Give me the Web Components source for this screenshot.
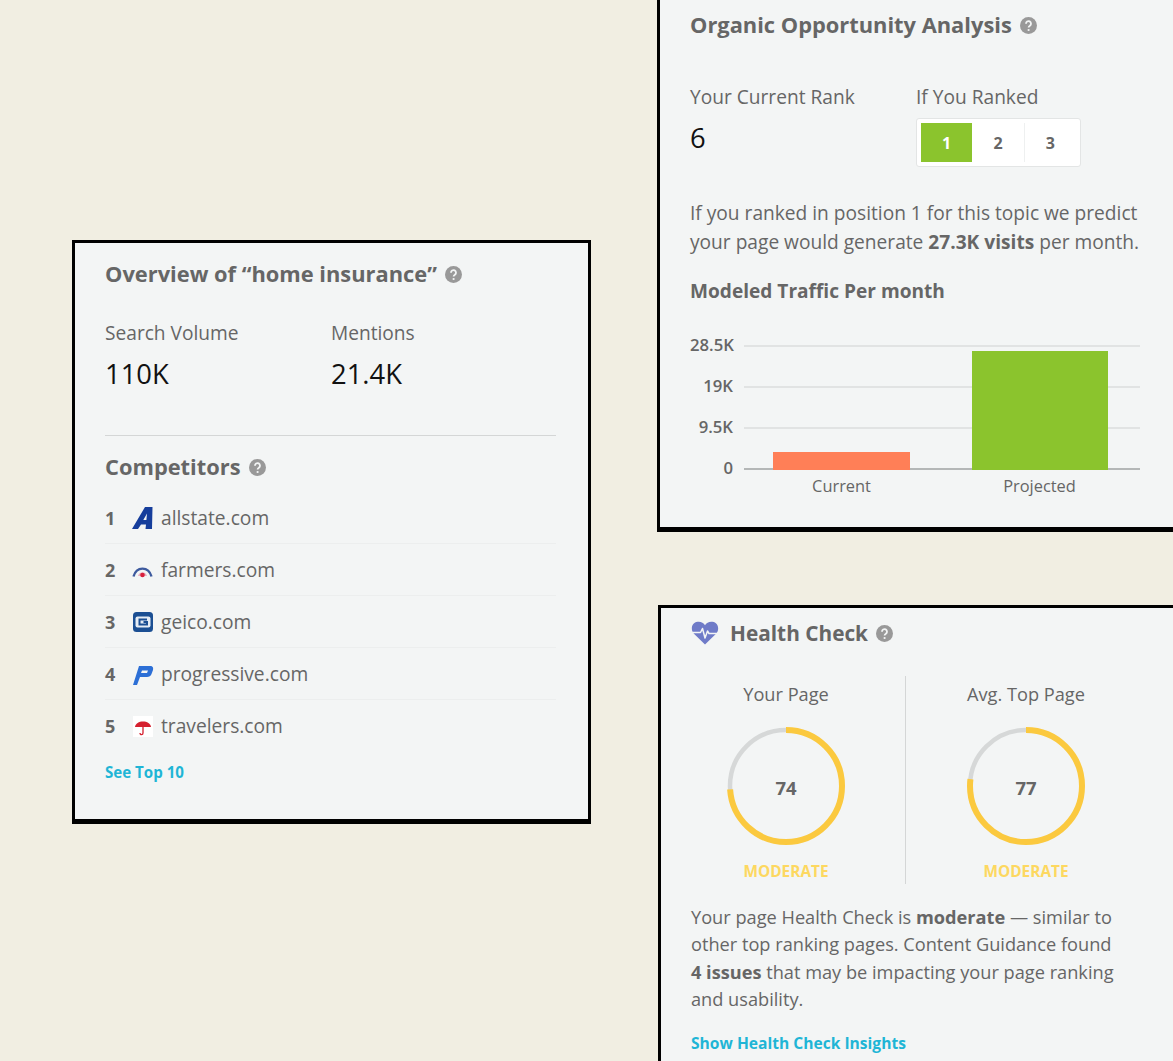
<!DOCTYPE html>
<html><head><meta charset="utf-8">
<style>
html,body{margin:0;height:1061px;overflow:hidden;background:#f1eee2;font-family:"Open Sans",sans-serif;color:#666}
</style></head><body>
<x-desk>
  <x-card style="--x:72px;--y:240px;--w:519px;--h:584px;--pad:17px 32px 0 30px">
    <x-title>Overview of “home insurance”</x-title>
    <div style="display:flex;margin-top:32px">
      <x-stat style="width:226px" label="Search Volume" value="110K"></x-stat>
      <x-stat label="Mentions" value="21.4K"></x-stat>
    </div>
    <div style="border-top:1px solid #d4d6d6;margin:44px 0 17px"></div>
    <x-title>Competitors</x-title>
    <div style="margin-top:11px">
      <x-rival n="1" kind="allstate">allstate.com</x-rival>
      <x-rival n="2" kind="farmers">farmers.com</x-rival>
      <x-rival n="3" kind="geico">geico.com</x-rival>
      <x-rival n="4" kind="progressive">progressive.com</x-rival>
      <x-rival n="5" kind="travelers" last>travelers.com</x-rival>
    </div>
    <x-link style="--fs:15.1px;margin-top:10px">See Top 10</x-link>
  </x-card>

  <x-card style="--x:657px;--y:-30px;--w:530px;--h:562px;--pad:38px 33px 0 30px">
    <x-title>Organic Opportunity Analysis</x-title>
    <div style="display:flex;margin-top:45px">
      <x-stat style="width:226px" label="Your Current Rank" value="6"></x-stat>
      <div>
        <x-plain style="--lh:26px">If You Ranked</x-plain>
        <x-ranks style="margin-top:8px"></x-ranks>
      </div>
    </div>
    <x-plain style="--lh:29px;margin-top:32px">If you ranked in position 1 for this topic we predict<br>your page would generate <b>27.3K visits</b> per month.</x-plain>
    <x-title style="--fs:19.1px;margin-top:20px" nohelp>Modeled Traffic Per month</x-title>
    <x-chart style="margin-top:40px"></x-chart>
  </x-card>

  <x-card style="--x:658px;--y:605px;--w:530px;--h:480px;--pad:11px 33px 0 30px">
    <x-title icon style="--fs:20.8px">Health Check</x-title>
    <div style="display:flex;margin-top:29px;height:208px">
      <x-gauge style="width:214px;padding-right:24px" value="74"  label="Your Page"></x-gauge>
      <div style="width:1px;background:#d4d6d6;flex:none"></div>
      <x-gauge style="width:240px" value="77" label="Avg. Top Page"></x-gauge>
    </div>
    <x-plain style="--fs:18.2px;--lh:27.3px;margin-top:20px">Your page Health Check is <b>moderate</b> — similar to<br>other top ranking pages. Content Guidance found<br><b>4 issues</b> that may be impacting your page ranking<br>and usability.</x-plain>
    <x-link style="--fs:15.6px;margin-top:19px">Show Health Check Insights</x-link>
  </x-card>
</x-desk>
<script>
function def(name, css, html){
  customElements.define(name, class extends HTMLElement{
    connectedCallback(){
      if(this.shadowRoot) return;
      const r=this.attachShadow({mode:'open'});
      const h=typeof html==='function'?html(this):html;
      r.innerHTML='<style>'+css+'</style>'+h;
    }
  });
}
const HELP='<svg width="17" height="17" viewBox="0 0 17 17" style="flex:none"><circle cx="8.5" cy="8.5" r="8.5" fill="#999"/><path d="M6 6.7a2.5 2.5 0 1 1 3.9 2c-.9.6-1.3.9-1.3 1.8" fill="none" stroke="#f3f5f5" stroke-width="1.8"/><circle cx="8.6" cy="13" r="1.1" fill="#f3f5f5"/></svg>';
const HEART='<svg width="28" height="24" viewBox="0 0 28 24" style="flex:none;margin-right:11px"><path d="M14 23.5 3.2 13C-1 8.7.6 1.8 6.5.8 9.8.3 12.5 1.8 14 4.3 15.5 1.8 18.2.3 21.5.8 27.4 1.8 29 8.7 24.8 13Z" fill="#6f7bc8"/><path d="M1 11.5h8.5l2-4 2.5 9.5 2.5-7 1.5 2.5H27" fill="none" stroke="#f3f5f5" stroke-width="1.5" stroke-linejoin="round"/></svg>';
const LOGOS={
 allstate:'<svg width="22" height="24" viewBox="0 0 22 24"><path d="M0 23 13 1H20.5L20 23H13.5L14 18.5H9L6 23ZM11.3 14H14.4L15 7.5Z" fill="#163e9c" fill-rule="evenodd"/></svg>',
 farmers:'<svg width="22" height="24" viewBox="0 0 22 24"><path d="M6 18C7.5 13 13.5 13 15 18Z" fill="#e8aebf"/><path d="M1.5 18.5C4.5 8 16.5 8 19.5 18.5" fill="none" stroke="#3d5a9e" stroke-width="2.4"/><circle cx="10.5" cy="17" r="2.3" fill="#d8203c"/></svg>',
 geico:'<svg width="22" height="24" viewBox="0 0 22 24"><rect x="1" y="2" width="20" height="20" rx="3.5" fill="#1b4f93"/><rect x="3.5" y="6.5" width="15" height="11" rx="2" fill="#e6edf5"/><path d="M15 9.5H7.5v5H15V12h-3.5" fill="none" stroke="#1b4f93" stroke-width="2"/></svg>',
 progressive:'<svg width="22" height="24" viewBox="0 0 22 24"><path d="M1 23 7 4H18C21 4 21.5 6 21 8L19.5 12C19 14 17 15 15 15H8L5 23ZM10 8.5H16L15 11H9Z" fill="#2c6fd6" fill-rule="evenodd"/></svg>',
 travelers:'<svg width="22" height="24" viewBox="0 0 22 24"><rect x="1" y="2" width="20" height="21" fill="#fff"/><path d="M3 13C3.5 5.5 18.5 5.5 19 13Z" fill="#d5202f"/><path d="M11 12v7c0 2.2-3 2.2-3 0" fill="none" stroke="#d5202f" stroke-width="1.3"/></svg>'
};
def('x-desk',':host{display:block;position:relative;width:1173px;height:1061px;overflow:hidden}','<slot></slot>');
def('x-card',`:host{position:absolute;left:var(--x);top:var(--y);width:var(--w);height:var(--h);box-sizing:border-box;display:block;background:#f3f5f5;border:3px solid #000;border-bottom-width:5px;padding:var(--pad);overflow:hidden}`,'<slot></slot>');
def('x-title',`:host{display:flex;align-items:center;font:700 var(--fs,21.85px)/28px "Open Sans",sans-serif;color:#666;white-space:nowrap}
 span{margin-right:8px}`,h=>(h.hasAttribute('icon')?HEART:'')+'<span><slot></slot></span>'+(h.hasAttribute('nohelp')?'':HELP));
def('x-stat',`:host{display:block;flex:none;font-family:"Open Sans",sans-serif}
 .l{font-size:19.15px;line-height:26px;color:#666}
 .v{font-size:27.4px;line-height:34px;color:#111;margin-top:11px}`,h=>`<div class="l">${h.getAttribute('label')}</div><div class="v">${h.getAttribute('value')}</div>`);
def('x-plain',`:host{display:block;font:400 var(--fs,19.15px)/var(--lh,26px) "Open Sans",sans-serif;color:#666;white-space:nowrap}`,'<slot></slot>');
def('x-link',`:host{display:block;font:700 var(--fs,14px)/22px "Open Sans",sans-serif;color:#1fb5d6;white-space:nowrap}`,'<slot></slot>');
def('x-rival',`:host{display:flex;align-items:center;height:51px;border-bottom:1px solid #eceeee;font:400 19.2px/26px "Open Sans",sans-serif;color:#666}
 :host([last]){border-bottom:0}
 b{width:27px;font-size:18px;color:#666;flex:none}
 svg{display:block;margin-right:7px}`,h=>`<b>${h.getAttribute('n')}</b>${LOGOS[h.getAttribute('kind')]}<slot></slot>`);
def('x-ranks',`:host{display:flex;box-sizing:border-box;width:165px;height:49px;background:#fff;border:1px solid #e3e5e5;border-radius:3px;padding:4px;font:700 16px/1 "Open Sans",sans-serif;color:#666}
 div{display:flex;align-items:center;justify-content:center;width:52px}
 .on{background:#8bc42d;color:#fff}
 .s{border-left:1px solid #eef0f0}`,'<div class="on">1</div><div>2</div><div class="s">3</div>');
def('x-chart',`:host{display:block;font:400 16.4px/20px "Open Sans",sans-serif;color:#666}
 .top{display:flex}
 .ax{width:43px;flex:none;font-weight:600;height:143px;display:flex;flex-direction:column;justify-content:space-between;text-align:right;margin:-10px 11px -8px 0;font-size:16.7px}
 .ax span{display:block;height:20px;white-space:nowrap}
 .plot{position:relative;width:396px;height:125px;display:flex;flex-direction:column;justify-content:space-between;box-sizing:border-box}
 .g{height:2px;background:#e1e3e3}
 .g.b{background:#b4b7b7}
 .bars{position:absolute;inset:0;display:flex;align-items:flex-end;padding:0 32px 0 29px;justify-content:space-between}
 .bar{width:137px}
 .xs{display:flex;margin:6px 0 0 54px;width:396px;padding:0 32px 0 29px;box-sizing:border-box;justify-content:space-between}
 .xs span{width:137px;text-align:center}`,
 `<div class="top"><div class="ax"><span>28.5K</span><span>19K</span><span>9.5K</span><span>0</span></div>
 <div class="plot"><div class="g"></div><div class="g"></div><div class="g"></div><div class="g b"></div>
 <div class="bars"><div class="bar" style="height:18px;background:#ff7f57"></div><div class="bar" style="height:119px;width:136px;background:#8bc42d"></div></div></div></div>
 <div class="xs"><span>Current</span><span>Projected</span></div>`);
def('x-gauge',`:host{display:flex;flex-direction:column;align-items:center;flex:none;box-sizing:border-box;padding-top:5px;font:400 18.2px/26px "Open Sans",sans-serif;color:#666}
 .r{position:relative;width:118px;height:118px;margin-top:20px}
 svg{display:block;transform:rotate(-90deg)}
 .n{position:absolute;inset:0;padding-top:3px;display:flex;align-items:center;justify-content:center;font-weight:700;font-size:18.5px}
 .m{font-weight:700;font-size:15.4px;line-height:20px;color:#fdd860;margin-top:17px}`,
 h=>{const v=h.getAttribute('value');return `<div>${h.getAttribute('label')}</div><div class="r"><svg width="118" height="118" viewBox="0 0 118 118"><circle cx="59" cy="59" r="56" fill="none" stroke="#d6d8d8" stroke-width="4.5"/><circle cx="59" cy="59" r="56" fill="none" stroke="#fbc93f" stroke-width="6" pathLength="100" stroke-dasharray="${v} 100"/></svg><div class="n">${v}</div></div><div class="m">MODERATE</div>`});
</script>
</body></html>
